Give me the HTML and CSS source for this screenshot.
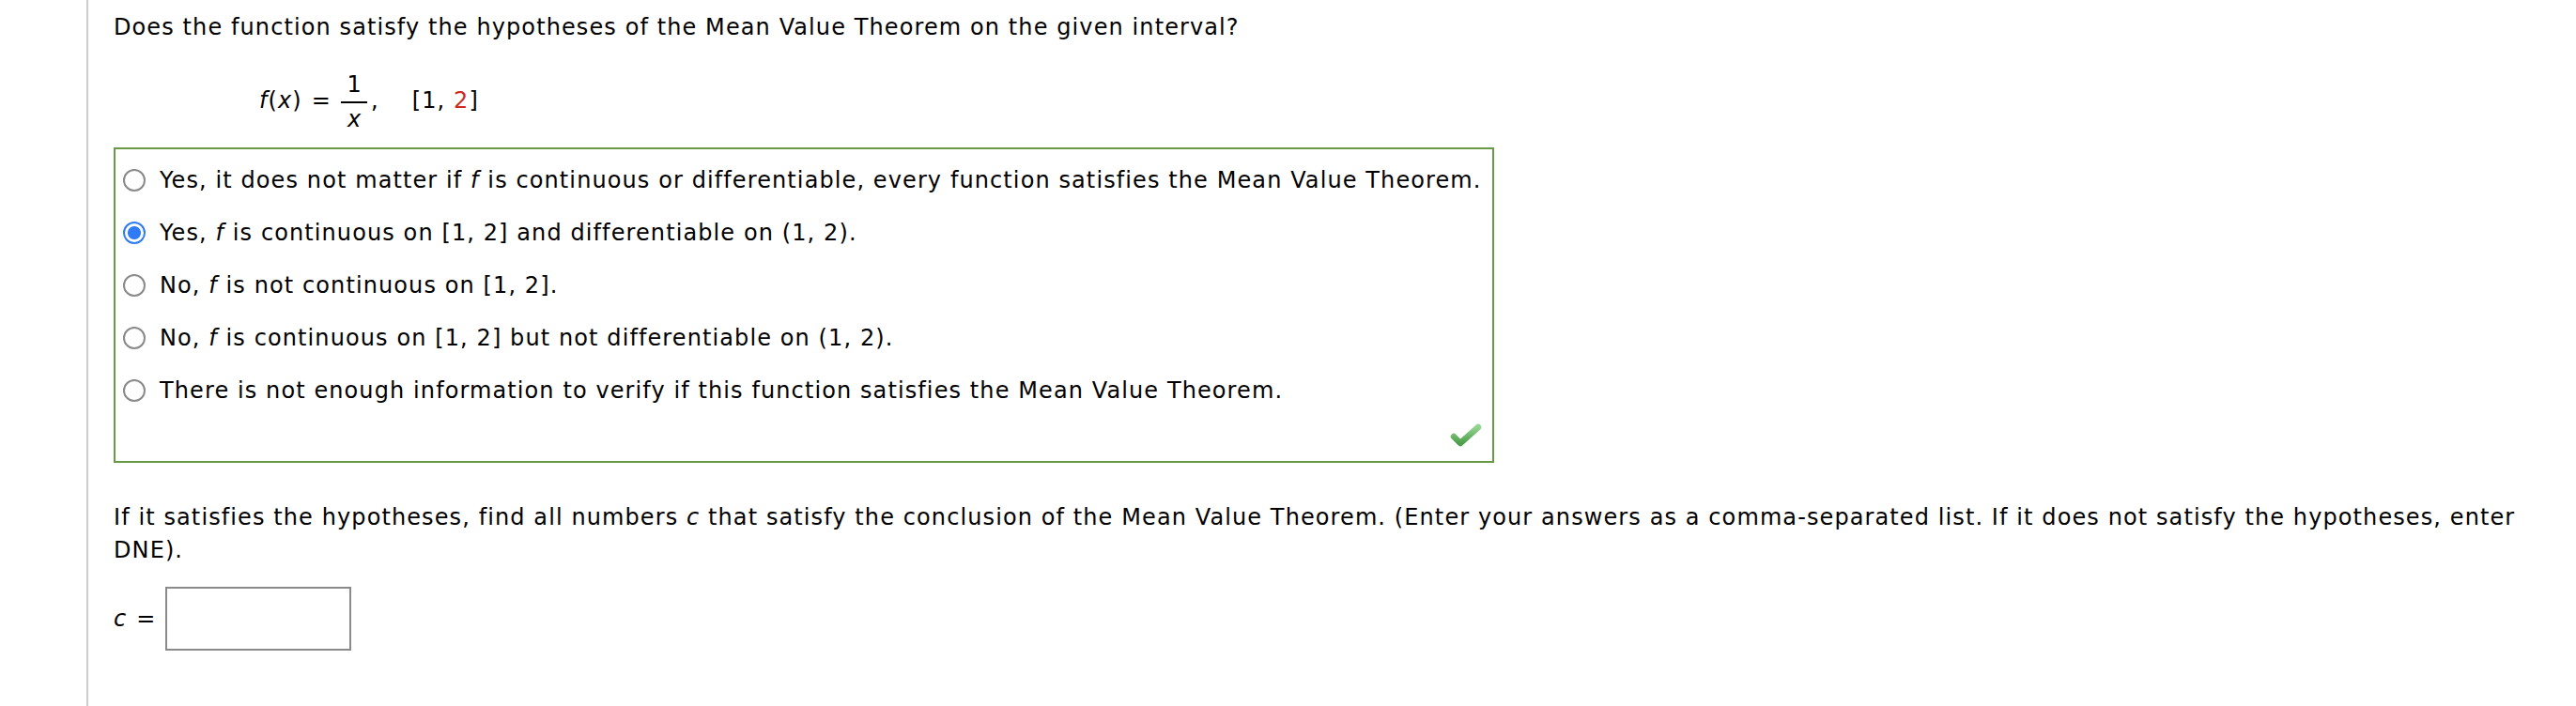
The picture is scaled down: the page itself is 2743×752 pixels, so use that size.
FILE: index.html
```html
<!DOCTYPE html>
<html>
<head>
<meta charset="utf-8">
<link rel="stylesheet" href="styles.css">
</head>
<body>
<div class="page">
  <p class="question">Does the function satisfy the hypotheses of the Mean Value Theorem on the given interval?</p>
  <div class="formula">
    <span class="it">f</span>(<span class="it">x</span>)<span class="eq">=</span><span class="frac"><span class="num">1</span><span class="bar"></span><span class="den it">x</span></span><span class="comma">,</span><span class="interval">[1, <span class="red">2</span>]</span>
  </div>
  <div class="answer-box">
    <div class="option"><span class="radio"></span><span class="label">Yes, it does not matter if <span class="it">f</span> is continuous or differentiable, every function satisfies the Mean Value Theorem.</span></div>
    <div class="option"><span class="radio checked"></span><span class="label">Yes, <span class="it">f</span> is continuous on [1, 2] and differentiable on (1, 2).</span></div>
    <div class="option"><span class="radio"></span><span class="label">No, <span class="it">f</span> is not continuous on [1, 2].</span></div>
    <div class="option"><span class="radio"></span><span class="label">No, <span class="it">f</span> is continuous on [1, 2] but not differentiable on (1, 2).</span></div>
    <div class="option"><span class="radio"></span><span class="label">There is not enough information to verify if this function satisfies the Mean Value Theorem.</span></div>
    <svg class="check" width="34" height="26" viewBox="0 0 34 26">
      <defs>
        <linearGradient id="g" x1="0" y1="0" x2="0" y2="1">
          <stop offset="0" stop-color="#93d490"/>
          <stop offset="1" stop-color="#4c9f4a"/>
        </linearGradient>
      </defs>
      <polyline points="4,14 11,21 30,4" fill="none" stroke="url(#g)" stroke-width="6.5" stroke-linecap="round" stroke-linejoin="round"/>
    </svg>
  </div>
  <p class="question second">If it satisfies the hypotheses, find all numbers <span class="it">c</span> that satisfy the conclusion of the Mean Value Theorem. (Enter your answers as a comma-separated list. If it does not satisfy the hypotheses, enter DNE).</p>
  <div class="entry">
    <span class="it">c</span><span class="eq2">=</span><span class="input"></span>
  </div>
</div>
</body>
</html>
```
FILE: styles.css
```css
html, body {
  margin: 0;
  padding: 0;
  background: #fff;
}
body {
  font-family: "DejaVu Sans", Verdana, sans-serif;
  font-size: 24px;
  letter-spacing: 1.1px;
  color: #000;
}
.page {
  margin-left: 92px;
  border-left: 2px solid #cccccc;
  min-height: 752px;
  box-sizing: border-box;
  padding: 12px 20px 0 27px;
}
.question {
  margin: 0;
  line-height: 35px;
}
.it {
  font-style: italic;
}
.formula {
  margin-top: 31px;
  padding-left: 155px;
  line-height: 35px;
  white-space: nowrap;
}
.eq {
  margin: 0 10px 0 10px;
}
.frac {
  display: inline-flex;
  flex-direction: column;
  align-items: center;
  width: 28px;
  vertical-align: 17px;
  line-height: 1;
  letter-spacing: 0;
}
.bar {
  display: block;
  width: 100%;
  height: 2px;
  background: #000;
  margin: 6px 0 5px;
}
.comma {
  margin-left: 4px;
}
.interval {
  margin-left: 35px;
}
.red {
  color: #d1261f;
}
.answer-box {
  position: relative;
  margin-top: 18px;
  width: 1470px;
  box-sizing: border-box;
  border: 2px solid #6b9a46;
  padding: 5px 0 47px 8px;
}
.option {
  display: flex;
  align-items: center;
  height: 56px;
  line-height: 28px;
}
.radio {
  flex: none;
  width: 24px;
  height: 24px;
  box-sizing: border-box;
  border: 2px solid #8a8a8a;
  border-radius: 50%;
  background: #fff;
  margin-right: 15px;
}
.radio.checked {
  border: 2.5px solid #2f7bf6;
  background: radial-gradient(circle, #2f7bf6 0 6.5px, #fff 7.5px);
}
.check {
  position: absolute;
  right: 11px;
  bottom: 14px;
}
.second {
  margin-top: 41px;
}
.entry {
  display: flex;
  align-items: center;
  margin-top: 21px;
}
.eq2 {
  margin-left: 10px;
}
.input {
  display: block;
  width: 198px;
  height: 68px;
  box-sizing: border-box;
  border: 2px solid #8a8a8a;
  margin-left: 9px;
}
```
